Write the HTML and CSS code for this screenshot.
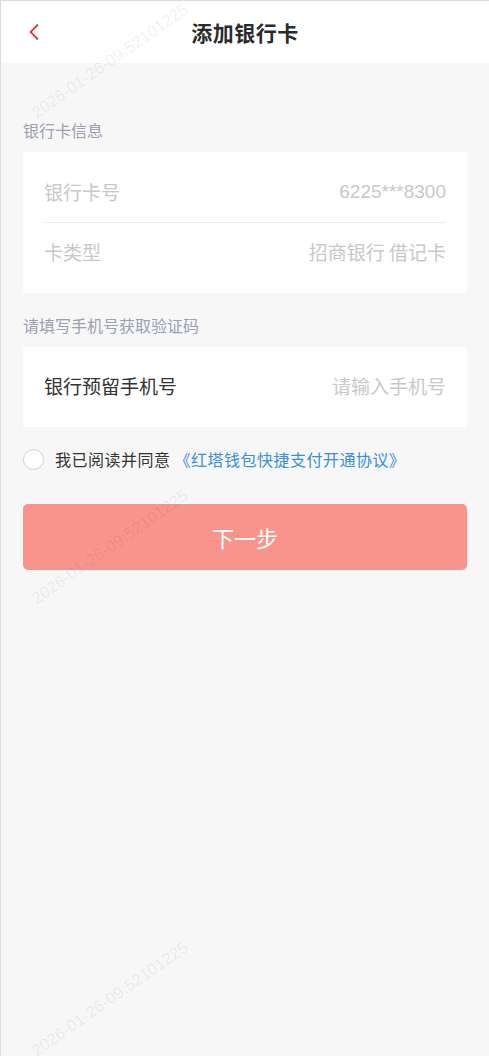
FILE: index.html
```html
<!DOCTYPE html>
<html lang="zh-CN">
<head>
<meta charset="utf-8">
<title>添加银行卡</title>
<link rel="stylesheet" href="styles.css">
</head>
<body>
<div class="page">
  <header class="topbar">
    <span class="back">
      <svg width="12" height="18" viewBox="0 0 12 18"><path d="M10 1.5 L2.5 9 L10 16.5" fill="none" stroke="#e8362f" stroke-width="1.8"/></svg>
    </span>
    <h1 class="title">添加银行卡</h1>
  </header>
  <main class="content">
    <div class="section-label first">银行卡信息</div>
    <div class="card double">
      <div class="row row-top">
        <span class="row-label muted">银行卡号</span>
        <span class="row-value muted num">6225***8300</span>
      </div>
      <div class="divider"></div>
      <div class="row row-bottom">
        <span class="row-label muted">卡类型</span>
        <span class="row-value muted">招商银行 借记卡</span>
      </div>
    </div>
    <div class="section-label">请填写手机号获取验证码</div>
    <div class="card single">
      <div class="row">
        <span class="row-label dark">银行预留手机号</span>
        <span class="row-value muted">请输入手机号</span>
      </div>
    </div>
    <div class="agree">
      <span class="check"></span>
      <span class="agree-text">我已阅读并同意</span>
      <span class="link">《红塔钱包快捷支付开通协议》</span>
    </div>
    <button class="next">下一步</button>
  </main>
  <div class="wm wm1">2026-01-26-09:52101225</div>
  <div class="wm wm2">2026-01-26-09:52101225</div>
  <div class="wm wm3">2026-01-26-09:52101225</div>
</div>
</body>
</html>
```

FILE: styles.css
```css
html, body {
  margin: 0;
  padding: 0;
  background: #f7f7f7;
}
body {
  font-family: "Liberation Sans", "Noto Sans CJK SC", sans-serif;
}
.page {
  position: relative;
  width: 488px;
  height: 1055px;
  border-top: 1px solid #dcdcdc;
  border-left: 1px solid #dcdcdc;
  background: #f7f7f7;
  overflow: hidden;
}
.topbar {
  height: 62px;
  background: #fff;
  display: flex;
  align-items: center;
  justify-content: center;
  position: relative;
}
.back {
  position: absolute;
  left: 27px;
  top: 22px;
  width: 12px;
  height: 18px;
  display: flex;
}
.title {
  margin: 0;
  font-family: "Noto Sans CJK SC", sans-serif;
  font-size: 21px;
  font-weight: 700;
  color: #2b2b2b;
  letter-spacing: 0.5px;
}
.content {
  padding: 0 22px;
}
.section-label {
  font-family: "Noto Sans CJK SC", sans-serif;
  font-size: 16px;
  color: #9ba0b1;
  line-height: 20px;
  padding: 22px 0 12px;
}
.section-label.first {
  padding-top: 57px;
  padding-bottom: 12px;
}
.card {
  background: #fff;
  padding: 0 21px;
}
.row {
  display: flex;
  align-items: center;
  justify-content: space-between;
  font-family: "Noto Sans CJK SC", sans-serif;
  font-size: 19px;
  line-height: 30px;
}
.row-top {
  padding: 25px 0 15px;
}
.row-bottom {
  padding: 14px 0 26px;
}
.card.single .row {
  padding: 24px 0 26px;
}
.divider {
  height: 1px;
  background: #ececec;
}
.muted {
  color: #c8c8c8;
}
.dark {
  color: #333;
}
.num {
  font-family: "Liberation Sans", sans-serif;
  font-size: 19px;
}
.agree {
  display: flex;
  align-items: center;
  padding-top: 22px;
  font-family: "Noto Sans CJK SC", sans-serif;
  font-size: 16px;
  letter-spacing: 0.5px;
  height: 20px;
}
.check {
  width: 19px;
  height: 19px;
  border: 1px solid #cfcfcf;
  border-radius: 50%;
  background: #fff;
  margin-right: 11px;
  flex: none;
}
.agree-text {
  color: #333;
  white-space: nowrap;
}
.link {
  color: #3a8fd9;
  margin-left: 4px;
  white-space: nowrap;
}
.next {
  display: block;
  width: 100%;
  height: 66px;
  margin-top: 35px;
  border: none;
  border-radius: 5px;
  background: #f8948c;
  color: #fff;
  font-family: "Noto Sans CJK SC", sans-serif;
  font-size: 22px;
  cursor: pointer;
}
.wm {
  position: absolute;
  left: 38px;
  font-family: "Liberation Sans", sans-serif;
  font-size: 16.5px;
  color: rgba(0, 0, 0, 0.07);
  transform: rotate(-35deg);
  transform-origin: left bottom;
  white-space: nowrap;
  pointer-events: none;
}
.wm1 { top: 102px; }
.wm2 { top: 588px; }
.wm3 { top: 1040px; }
```
